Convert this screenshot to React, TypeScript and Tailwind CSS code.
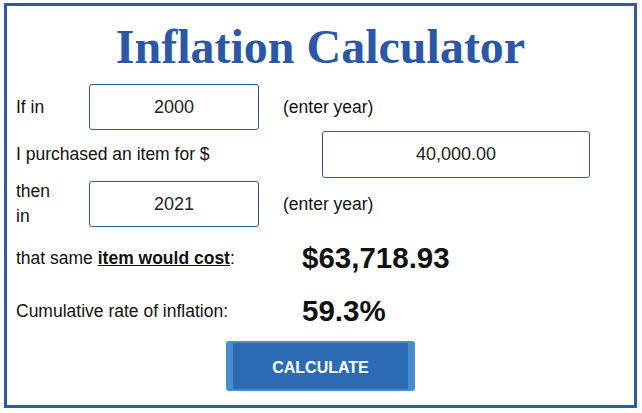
export default function App() {
  const sans = "font-['Liberation_Sans',Arial,sans-serif]";
  return (
    <div className={`h-[413px] w-[642px] bg-white pl-[4px] pt-[3px] ${sans} text-[17.5px] text-[#111]`}>
      <div className="flex h-[405px] w-[633px] flex-col border-[3px] border-[#2a5ca8] bg-white pl-[9px]">
        <h1 className="flex h-[80px] items-center justify-center pr-[9px] pt-[2px] font-['Liberation_Serif','Times_New_Roman',serif] text-[48px] font-bold text-[#2b58a6]">
          Inflation Calculator
        </h1>

        <div className="-mt-[2px] flex h-[46px] items-center">
          <span className="w-[73px]">If in</span>
          <input
            readOnly
            value="2000"
            className="h-[46px] w-[170px] rounded-[3px] border border-[#2e5b96] text-center text-[18px] text-[#222] outline-none"
          />
          <span className="ml-[24px]">(enter year)</span>
        </div>

        <div className="mt-[1px] flex h-[47px] items-center">
          <span className="w-[306px]">I purchased an item for $</span>
          <input
            readOnly
            value="40,000.00"
            className="h-[47px] w-[268px] rounded-[3px] border border-[#2e5b96] text-center text-[18px] text-[#222] outline-none"
          />
        </div>

        <div className="mt-[3px] flex h-[46px] items-center">
          <span className="w-[73px]">
            <span className="block w-[45px] leading-[25px]">then in</span>
          </span>
          <input
            readOnly
            value="2021"
            className="h-[46px] w-[170px] rounded-[3px] border border-[#2e5b96] text-center text-[18px] text-[#222] outline-none"
          />
          <span className="ml-[24px]">(enter year)</span>
        </div>

        <div className="mt-[13px] flex h-[36px] items-center">
          <span className="w-[286px]">
            that same <b className="underline">item would cost</b>:
          </span>
          <span className="text-[29.5px] font-bold">$63,718.93</span>
        </div>

        <div className="mt-[17px] flex h-[36px] items-center">
          <span className="w-[286px]">Cumulative rate of inflation:</span>
          <span className="text-[29.5px] font-bold">59.3%</span>
        </div>

        <div className="mt-[12px] flex justify-center pr-[9px]">
          <button className="h-[50px] w-[189px] rounded-[3px] border-x-[7px] border-y-[2px] border-[#4a8dcc] bg-[#2e6bb5] pt-[4px] text-[16px] font-bold text-white">
            CALCULATE
          </button>
        </div>
      </div>
    </div>
  );
}
